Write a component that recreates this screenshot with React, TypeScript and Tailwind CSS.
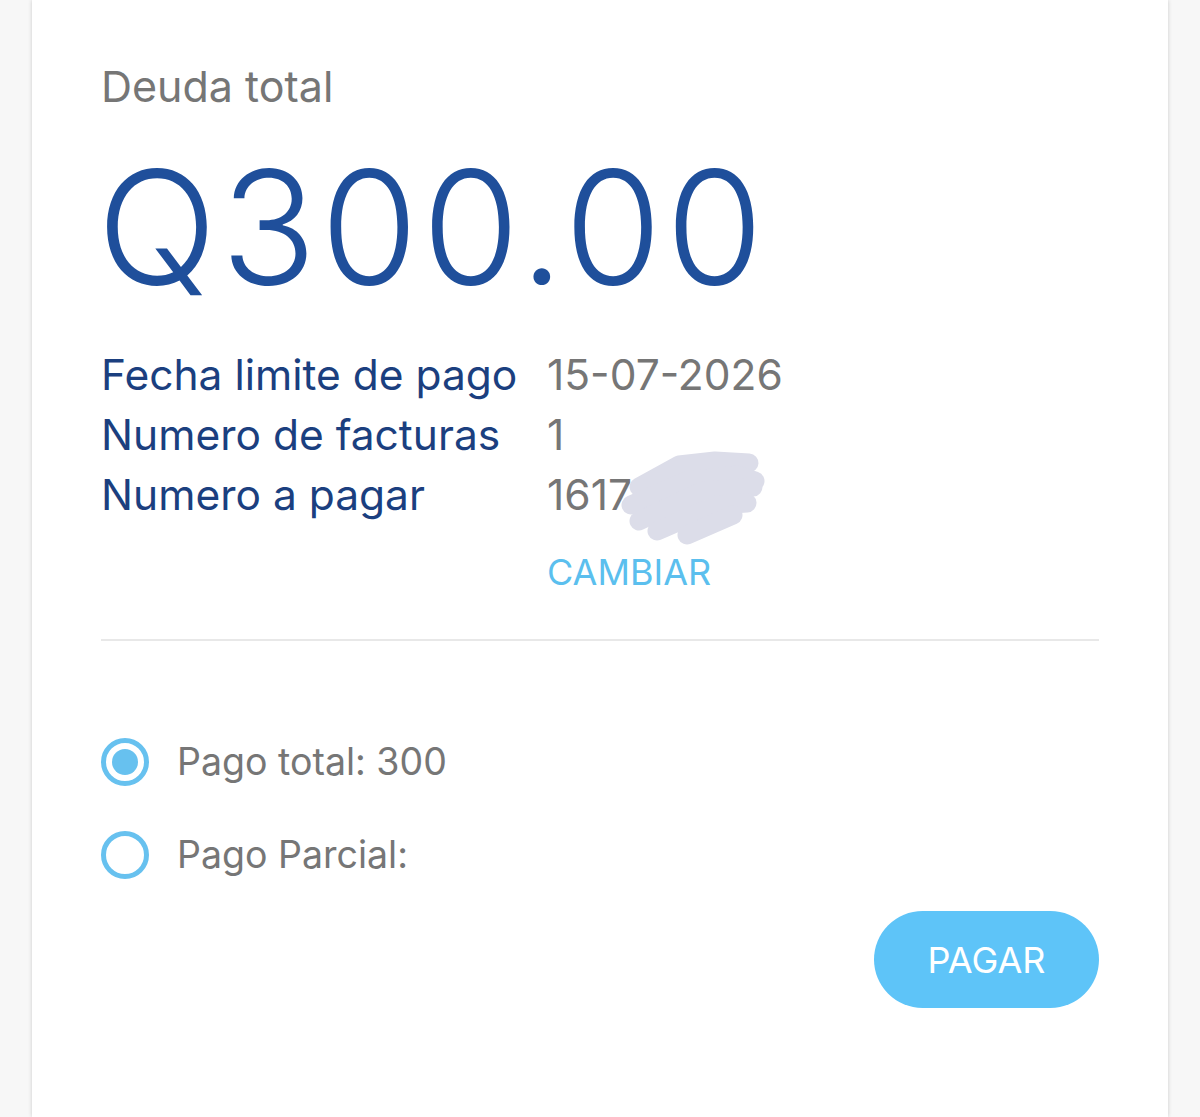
import React from "react";

const font = { fontFamily: "Inter, 'Noto Sans', sans-serif" };

function Radio({ checked }: { checked?: boolean }) {
  return (
    <span className="flex h-[48px] w-[48px] shrink-0 items-center justify-center rounded-full border-[5px] border-[#67c1ef] bg-white">
      {checked && <span className="h-[26px] w-[26px] rounded-full bg-[#67c1ef]" />}
    </span>
  );
}

export default function App() {
  return (
    <div className="min-h-[1117px] w-full bg-[#f7f7f7]" style={font}>
      <div className="mx-[32px] min-h-[1117px] bg-white px-[69px] pt-[60px] shadow-[0_0_4px_rgba(0,0,0,0.18)]">
        <p className="text-[43px] leading-[52px] text-[#767676]">Deuda total</p>

        <h1 className="ml-[-4px] mt-[30px] text-[158px] font-light leading-[170px] tracking-[0.025em] text-[#1f4f9b]">
          Q300.00
        </h1>

        <div className="mt-[33px] grid grid-cols-[446px_1fr] text-[42.5px] leading-[60px]">
          <span className="text-[#1b3f7f]">Fecha limite de pago</span>
          <span className="text-[#767676]">15-07-2026</span>
          <span className="text-[#1b3f7f]">Numero de facturas</span>
          <span className="text-[#767676]">1</span>
          <span className="text-[#1b3f7f]">Numero a pagar</span>
          <span className="relative text-[#767676]">
            1617
            <svg
              className="absolute left-[70px] top-[-14px]"
              width="150"
              height="96"
              viewBox="0 0 150 96"
            >
              <g
                fill="none"
                stroke="#dcdde9"
                strokeWidth="19"
                strokeLinecap="round"
                strokeLinejoin="round"
              >
                <path d="M22 36 L62 14 L98 10 L132 12" />
                <path d="M14 54 L70 30 L120 24 L138 30" />
                <path d="M22 70 L86 40 L136 36" />
                <path d="M40 80 L100 54 L130 52" />
                <path d="M70 84 L116 64" />
              </g>
            </svg>
          </span>
          <span />
          <span className="mt-[23px] text-[36px] leading-[48px] text-[#5bbfee]">CAMBIAR</span>
        </div>

        <div className="mt-[43px] h-[2px] w-full bg-[#e8e8e8]" />

        <div className="mt-[97px] flex flex-col gap-[45px]">
          <label className="flex items-center gap-[28px]">
            <Radio checked />
            <span className="text-[37.5px] leading-[48px] text-[#767676]">Pago total: 300</span>
          </label>
          <label className="flex items-center gap-[28px]">
            <Radio />
            <span className="text-[37.5px] leading-[48px] text-[#767676]">Pago Parcial:</span>
          </label>
        </div>

        <div className="mt-[32px] flex justify-end">
          <button
            type="button"
            className="h-[97px] w-[225px] rounded-full bg-[#5ec4f8] text-[36px] text-white"
          >
            PAGAR
          </button>
        </div>
      </div>
    </div>
  );
}
